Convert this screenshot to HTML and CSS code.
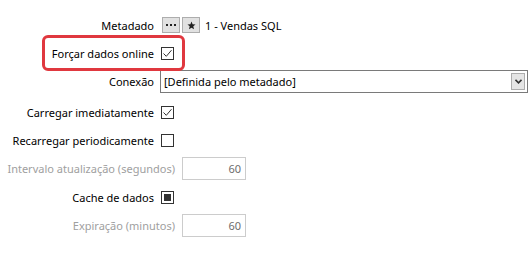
FILE: index.html
```html
<!DOCTYPE html>
<html lang="pt">
<head>
<meta charset="utf-8">
<link rel="stylesheet" href="styles.css">
</head>
<body>
<div class="form">
  <div class="row r1">
    <span class="label">Metadado</span>
    <span class="btns">
      <span class="btn"><svg width="10" height="4" viewBox="0 0 10 4"><rect x="0" y="1" width="2" height="2" fill="#222"/><rect x="4" y="1" width="2" height="2" fill="#222"/><rect x="8" y="1" width="2" height="2" fill="#222"/></svg></span>
      <span class="btn"><svg width="9" height="9" viewBox="0 0 10 10"><path d="M5 0.5 L6.2 3.6 L9.5 3.8 L7 5.9 L7.8 9.3 L5 7.5 L2.2 9.3 L3 5.9 L0.5 3.8 L3.8 3.6 Z" fill="#222"/></svg></span>
      <span class="meta-name">1 - Vendas SQL</span>
    </span>
  </div>
  <div class="row r2">
    <span class="hl-col">
      <span class="highlight">
        <span>Forçar dados online</span>
        <span class="cb"><svg width="11" height="11" viewBox="0 0 11 11"><path d="M1.5 5.5 L4.3 8.3 L9.5 2.2" fill="none" stroke="#333" stroke-width="1"/></svg></span>
      </span>
    </span>
  </div>
  <div class="row r3">
    <span class="label">Conexão</span>
    <div class="select">
      <span class="select-text">[Definida pelo metadado]</span>
      <span class="select-btn"><svg width="7" height="5" viewBox="0 0 7 5"><path d="M0.5 0.8 L3.5 3.8 L6.5 0.8" fill="none" stroke="#333" stroke-width="1.6"/></svg></span>
    </div>
  </div>
  <div class="row r4">
    <span class="label">Carregar imediatamente</span>
    <span class="cb"><svg width="11" height="11" viewBox="0 0 11 11"><path d="M1.5 5.5 L4.3 8.3 L9.5 2.2" fill="none" stroke="#333" stroke-width="1"/></svg></span>
  </div>
  <div class="row r5">
    <span class="label">Recarregar periodicamente</span>
    <span class="cb"></span>
  </div>
  <div class="row r6">
    <span class="label wide disabled">Intervalo atualização (segundos)</span>
    <span class="num">60</span>
  </div>
  <div class="row r7">
    <span class="label">Cache de dados</span>
    <span class="cb"><span class="fill"></span></span>
  </div>
  <div class="row r8">
    <span class="label wide disabled">Expiração (minutos)</span>
    <span class="num">60</span>
  </div>
</div>
</body>
</html>
```

FILE: styles.css
```css
html, body {
  margin: 0;
  padding: 0;
  background: #ffffff;
}
body {
  width: 532px;
  height: 259px;
  overflow: hidden;
  font-family: "Noto Sans", "Open Sans", sans-serif;
  font-size: 11px;
  color: #000000;
}
.form {
  display: flex;
  flex-direction: column;
  padding-top: 11px;
}
.row {
  display: flex;
  align-items: center;
  height: 28px;
}
.r4 { margin-top: 3px; }
.r7 { margin-top: 1px; }
.label {
  width: 154px;
  flex: none;
  display: flex;
  justify-content: flex-end;
  white-space: nowrap;
  margin-right: 7px;
}
.label.wide {
  width: 175px;
}
.disabled {
  color: #a0a0a0;
}
.btns {
  display: flex;
  align-items: center;
  gap: 2px;
  margin-left: 1px;
}
.btn {
  width: 16px;
  height: 14px;
  border: 1px solid #adadad;
  background: #e1e1e1;
  display: flex;
  align-items: center;
  justify-content: center;
}
.meta-name {
  margin-left: 3px;
}
.hl-col {
  width: 174px;
  flex: none;
  display: flex;
  justify-content: flex-end;
  white-space: nowrap;
}
.highlight {
  position: relative;
  display: inline-flex;
  align-items: center;
  gap: 7px;
}
.highlight::after {
  content: "";
  position: absolute;
  left: -10px;
  right: -11px;
  top: -11px;
  bottom: -10px;
  border: 3px solid #e0383f;
  border-radius: 6px;
}
.cb {
  width: 11px;
  height: 11px;
  border: 1px solid #333;
  background: #fff;
  display: flex;
  align-items: center;
  justify-content: center;
  flex: none;
}
.cb .fill {
  width: 7px;
  height: 7px;
  background: #333;
}
.select {
  margin-left: -1px;
  width: 366px;
  height: 21px;
  border: 1px solid #7a7a7a;
  display: flex;
  align-items: center;
  justify-content: space-between;
}
.select-text {
  padding-left: 3px;
}
.select-btn {
  width: 12px;
  height: 15px;
  border: 1px solid #adadad;
  background: #e5e5e5;
  margin-right: 2px;
  display: flex;
  align-items: center;
  justify-content: center;
}
.num {
  width: 58px;
  height: 21px;
  border: 1px solid #cccccc;
  color: #6d6d6d;
  display: flex;
  align-items: center;
  justify-content: flex-end;
  padding-right: 4px;
}
```
